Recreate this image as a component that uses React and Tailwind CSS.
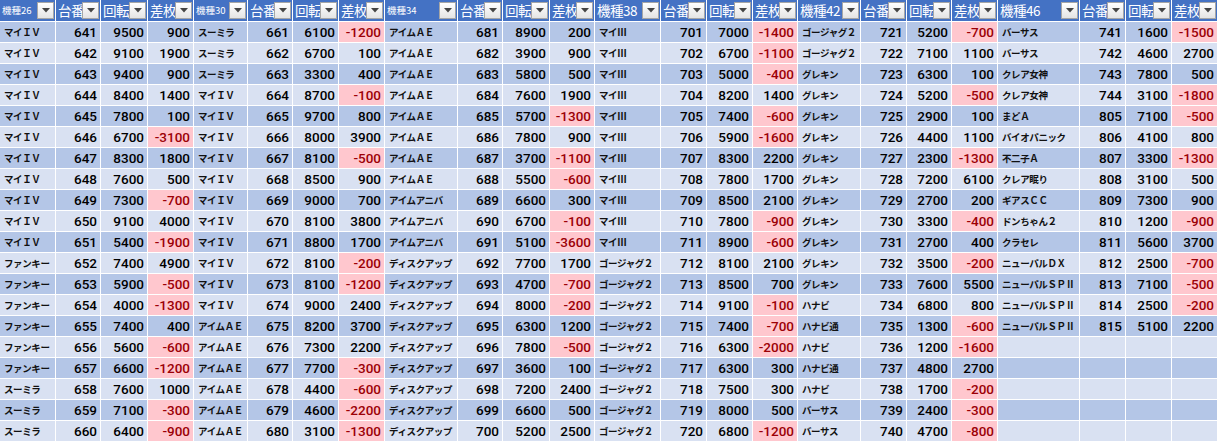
import React from 'react';

const groups = [
  {
    title: '機種26', big: false,
    rows: [
      ['マイＩＶ', 641, 9500, 900], ['マイＩＶ', 642, 9100, 1900], ['マイＩＶ', 643, 9400, 900],
      ['マイＩＶ', 644, 8400, 1400], ['マイＩＶ', 645, 7800, 100], ['マイＩＶ', 646, 6700, -3100],
      ['マイＩＶ', 647, 8300, 1800], ['マイＩＶ', 648, 7600, 500], ['マイＩＶ', 649, 7300, -700],
      ['マイＩＶ', 650, 9100, 4000], ['マイＩＶ', 651, 5400, -1900], ['ファンキー', 652, 7400, 4900],
      ['ファンキー', 653, 5900, -500], ['ファンキー', 654, 4000, -1300], ['ファンキー', 655, 7400, 400],
      ['ファンキー', 656, 5600, -600], ['ファンキー', 657, 6600, -1200], ['スーミラ', 658, 7600, 1000],
      ['スーミラ', 659, 7100, -300], ['スーミラ', 660, 6400, -900],
    ],
  },
  {
    title: '機種30', big: false,
    rows: [
      ['スーミラ', 661, 6100, -1200], ['スーミラ', 662, 6700, 100], ['スーミラ', 663, 3300, 400],
      ['マイＩＶ', 664, 8700, -100], ['マイＩＶ', 665, 9700, 800], ['マイＩＶ', 666, 8000, 3900],
      ['マイＩＶ', 667, 8100, -500], ['マイＩＶ', 668, 8500, 900], ['マイＩＶ', 669, 9000, 700],
      ['マイＩＶ', 670, 8100, 3800], ['マイＩＶ', 671, 8800, 1700], ['マイＩＶ', 672, 8100, -200],
      ['マイＩＶ', 673, 8100, -1200], ['マイＩＶ', 674, 9000, 2400], ['アイムＡＥ', 675, 8200, 3700],
      ['アイムＡＥ', 676, 7300, 2200], ['アイムＡＥ', 677, 7700, -300], ['アイムＡＥ', 678, 4400, -600],
      ['アイムＡＥ', 679, 4600, -2200], ['アイムＡＥ', 680, 3100, -1300],
    ],
  },
  {
    title: '機種34', big: false,
    rows: [
      ['アイムＡＥ', 681, 8900, 200], ['アイムＡＥ', 682, 3900, 900], ['アイムＡＥ', 683, 5800, 500],
      ['アイムＡＥ', 684, 7600, 1900], ['アイムＡＥ', 685, 5700, -1300], ['アイムＡＥ', 686, 7800, 900],
      ['アイムＡＥ', 687, 3700, -1100], ['アイムＡＥ', 688, 5500, -600], ['アイムアニバ', 689, 6600, 300],
      ['アイムアニバ', 690, 6700, -100], ['アイムアニバ', 691, 5100, -3600], ['ディスクアップ', 692, 7700, 1700],
      ['ディスクアップ', 693, 4700, -700], ['ディスクアップ', 694, 8000, -200], ['ディスクアップ', 695, 6300, 1200],
      ['ディスクアップ', 696, 7800, -500], ['ディスクアップ', 697, 3600, 100], ['ディスクアップ', 698, 7200, 2400],
      ['ディスクアップ', 699, 6600, 500], ['ディスクアップ', 700, 5200, 2500],
    ],
  },
  {
    title: '機種38', big: true,
    rows: [
      ['マイⅢ', 701, 7000, -1400], ['マイⅢ', 702, 6700, -1100], ['マイⅢ', 703, 5000, -400],
      ['マイⅢ', 704, 8200, 1400], ['マイⅢ', 705, 7400, -600], ['マイⅢ', 706, 5900, -1600],
      ['マイⅢ', 707, 8300, 2200], ['マイⅢ', 708, 7800, 1700], ['マイⅢ', 709, 8500, 2100],
      ['マイⅢ', 710, 7800, -900], ['マイⅢ', 711, 8900, -600], ['ゴージャグ２', 712, 8100, 2100],
      ['ゴージャグ２', 713, 8500, 700], ['ゴージャグ２', 714, 9100, -100], ['ゴージャグ２', 715, 7400, -700],
      ['ゴージャグ２', 716, 6300, -2000], ['ゴージャグ２', 717, 6300, 300], ['ゴージャグ２', 718, 7500, 300],
      ['ゴージャグ２', 719, 8000, 500], ['ゴージャグ２', 720, 6800, -1200],
    ],
  },
  {
    title: '機種42', big: true,
    rows: [
      ['ゴージャグ２', 721, 5200, -700], ['ゴージャグ２', 722, 7100, 1100], ['グレキン', 723, 6300, 100],
      ['グレキン', 724, 5200, -500], ['グレキン', 725, 2900, 100], ['グレキン', 726, 4400, 1100],
      ['グレキン', 727, 2300, -1300], ['グレキン', 728, 7200, 6100], ['グレキン', 729, 2700, 200],
      ['グレキン', 730, 3300, -400], ['グレキン', 731, 2700, 400], ['グレキン', 732, 3500, -200],
      ['グレキン', 733, 7600, 5500], ['ハナビ', 734, 6800, 800], ['ハナビ通', 735, 1300, -600],
      ['ハナビ', 736, 1200, -1600], ['ハナビ通', 737, 4800, 2700], ['ハナビ', 738, 1700, -200],
      ['バーサス', 739, 2400, -300], ['バーサス', 740, 4700, -800],
    ],
  },
  {
    title: '機種46', big: true,
    rows: [
      ['バーサス', 741, 1600, -1500], ['バーサス', 742, 4600, 2700], ['クレア女神', 743, 7800, 500],
      ['クレア女神', 744, 3100, -1800], ['まどＡ', 805, 7100, -500], ['バイオパニック', 806, 4100, 800],
      ['不二子Ａ', 807, 3300, -1300], ['クレア眠り', 808, 3100, 500], ['ギアスＣＣ', 809, 7300, 900],
      ['ドンちゃん２', 810, 1200, -900], ['クラセレ', 811, 5600, 3700], ['ニューパルＤＸ', 812, 2500, -700],
      ['ニューパルＳＰⅡ', 813, 7100, -500], ['ニューパルＳＰⅡ', 814, 2500, -200], ['ニューパルＳＰⅡ', 815, 5100, 2200],
      null, null, null, null, null,
    ],
  },
];

const jp = { fontFamily: '"Noto Sans CJK JP", "Noto Sans", sans-serif' };
const num = { fontFamily: 'Roboto, "Liberation Sans", sans-serif' };

function FilterButton() {
  return (
    <span className="absolute right-[1px] top-[2px] flex h-[17px] w-[17px] items-center justify-center border border-[#a6a6a6] bg-gradient-to-b from-white to-[#e4e4e4]">
      <svg width="8" height="5" viewBox="0 0 8 5">
        <path d="M0 0h8L4 4.5z" fill="#444" />
      </svg>
    </span>
  );
}

function HeaderCell({ label, small }) {
  return (
    <div
      className={`relative flex h-[22px] items-center overflow-hidden whitespace-nowrap border-r border-b border-white bg-[#4472c4] pl-[2px] text-white ${small ? 'text-[9.5px]' : 'text-[13.5px] tracking-[-0.5px]'}`}
      style={jp}
    >
      {label}
      <FilterButton />
    </div>
  );
}

export default function App() {
  const rows = Array.from({ length: 20 }, (_, i) => i);

  return (
    <div className="h-[443px] w-[1218px] overflow-hidden bg-white">
      <div className="grid grid-cols-[56px_45px_47px_46px_54px_45px_46px_46px_73px_45px_47px_45px_66px_46px_46px_45px_63px_46px_45px_46px_82px_46px_46px_46px]">
        {groups.map((g) => (
          <React.Fragment key={g.title}>
            <HeaderCell label={g.title} small={!g.big} />
            <HeaderCell label="台番号" />
            <HeaderCell label="回転数" />
            <HeaderCell label="差枚数" />
          </React.Fragment>
        ))}

        {rows.map((i) => {
          const band = i % 2 === 0 ? 'bg-[#b4c6e7]' : 'bg-[#d9e1f2]';
          return groups.map((g) => {
            const r = g.rows[i];
            const cell = 'flex h-[21px] items-center overflow-hidden whitespace-nowrap border-r border-b border-white';
            if (!r) {
              return (
                <React.Fragment key={g.title + i}>
                  <div className={`${cell} ${band}`} />
                  <div className={`${cell} ${band}`} />
                  <div className={`${cell} ${band}`} />
                  <div className={`${cell} ${band}`} />
                </React.Fragment>
              );
            }
            const neg = r[3] < 0;
            return (
              <React.Fragment key={g.title + i}>
                <div className={`${cell} ${band} pl-[4px] text-[9.5px] font-bold tracking-[-0.4px] text-[#111]`} style={jp}>
                  {r[0]}
                </div>
                <div className={`${cell} ${band} justify-end pr-[3px] text-[13.5px] font-medium text-black`} style={num}>
                  {r[1]}
                </div>
                <div className={`${cell} ${band} justify-end pr-[3px] text-[13.5px] font-medium text-black`} style={num}>
                  {r[2]}
                </div>
                <div
                  className={`${cell} justify-end pr-[3px] text-[13.5px] font-medium ${neg ? 'bg-[#ffc7ce] text-[#9c0006]' : `${band} text-black`}`}
                  style={num}
                >
                  {r[3]}
                </div>
              </React.Fragment>
            );
          });
        })}
      </div>
    </div>
  );
}
